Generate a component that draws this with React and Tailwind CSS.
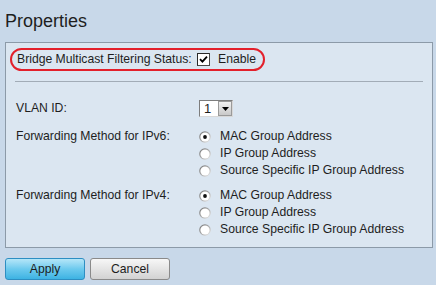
function Radio({ checked }) {
  return (
    <svg width="12" height="12" viewBox="0 0 12 12" className="shrink-0">
      <defs>
        <linearGradient id="rgo" x1="0" y1="0" x2="1" y2="1">
          <stop offset="0" stopColor="#6e6e6e" />
          <stop offset="0.5" stopColor="#a8a8a8" />
          <stop offset="1" stopColor="#f4f4f4" />
        </linearGradient>
      </defs>
      <circle cx="6" cy="6" r="5.8" fill="url(#rgo)" />
      <circle cx="6" cy="6" r="4.6" fill="#ffffff" />
      {checked && <circle cx="6" cy="6" r="1.9" fill="#111" />}
    </svg>
  );
}

function RadioRow({ checked, label }) {
  return (
    <div className="h-[17px] flex items-center gap-[9px]">
      <Radio checked={checked} />
      <span>{label}</span>
    </div>
  );
}

function Group({ label }) {
  return (
    <div className="flex">
      <div className="w-[183px] h-[17px] flex items-center">{label}</div>
      <div className="flex flex-col">
        <RadioRow checked label="MAC Group Address" />
        <RadioRow label="IP Group Address" />
        <RadioRow label="Source Specific IP Group Address" />
      </div>
    </div>
  );
}

export default function App() {
  return (
    <div className="w-[436px] h-[285px] bg-[#c8d8e9] text-[#1e1e1e] font-['Liberation_Sans',Arial,sans-serif] text-[12.2px] overflow-hidden">
      <div className="pl-[5px] pt-[11px] text-[18px] leading-[20px]">Properties</div>
      <div className="mt-[11px] ml-[5px] w-[428px] h-[206px] border border-[#8c9aa8] bg-[#dbe6f1]">
        <div className="ml-[4px] mt-[5px] w-[255px] h-[23px] rounded-full border-2 border-[#e3202b] flex items-center pl-[5px]">
          <span className="w-[180px]">Bridge Multicast Filtering Status:</span>
          <span className="w-[13px] h-[13px] bg-white border border-[#4a4a4a] border-t-[#2a2a2a] border-l-[#2a2a2a] flex items-center justify-center">
            <svg width="9" height="9" viewBox="0 0 9 9">
              <path d="M1 4.2 L3.4 6.6 L8 1.6" fill="none" stroke="#000" strokeWidth="1.8" />
            </svg>
          </span>
          <span className="ml-[8px]">Enable</span>
        </div>
        <div className="mx-[9px] mt-[10px] border-t border-[#a2acb7]"></div>
        <div className="pl-[10px] mt-[18px] flex flex-col">
          <div className="flex items-center h-[17px]">
            <div className="w-[183px]">VLAN ID:</div>
            <div className="w-[34px] h-[17px] flex bg-white border border-[#7d7d7d] border-r-[#d8d8d8] border-b-[#d8d8d8]">
              <div className="flex-1 pl-[4px] leading-[15px] text-[13px]">1</div>
              <div className="w-[14px] h-full bg-gradient-to-b from-[#f0f0f0] to-[#c9c9c9] border border-[#9a9a9a] flex items-center justify-center">
                <svg width="7" height="4" viewBox="0 0 7 4">
                  <path d="M0 0 H7 L3.5 4 Z" fill="#000" />
                </svg>
              </div>
            </div>
          </div>
          <div className="mt-[11px]">
            <Group label="Forwarding Method for IPv6:" />
          </div>
          <div className="mt-[8px]">
            <Group label="Forwarding Method for IPv4:" />
          </div>
        </div>
      </div>
      <div className="ml-[5px] mt-[10px] flex gap-[5px]">
        <button className="w-[80px] h-[22px] rounded-[3px] border border-[#2d8ec2] bg-gradient-to-b from-[#b4e6f8] via-[#6ccaee] to-[#3cb3e3] text-[12.2px] text-[#1c1c1c]">
          Apply
        </button>
        <button className="w-[80px] h-[22px] rounded-[3px] border border-[#8a8a8a] bg-gradient-to-b from-[#f7f7f7] to-[#d2d2d2] text-[12.2px] text-[#1c1c1c]">
          Cancel
        </button>
      </div>
    </div>
  );
}
